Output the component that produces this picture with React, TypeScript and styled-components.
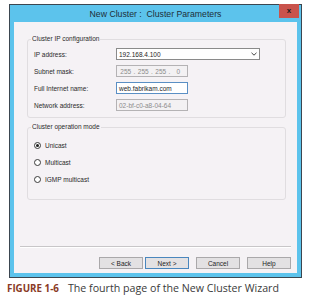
import React from 'react';
import styled, { createGlobalStyle } from 'styled-components';

const Global = createGlobalStyle`
  html, body { margin: 0; padding: 0; background: #ffffff; }
  body { font-family: "Liberation Sans", Arial, sans-serif; }
  * { box-sizing: border-box; }
`;

const Page = styled.div`
  width: 317px;
  height: 299px;
  padding: 4px 0 0 7px;
  display: flex;
  flex-direction: column;
`;

const Window = styled.div`
  margin-left: 2px;
  width: 293px;
  height: 274px;
  border: 1px solid #3b4650;
  background: #5cc3ec;
  padding: 0 4px 4px 4px;
  display: flex;
  flex-direction: column;
`;

const TitleBar = styled.div`
  height: 17px;
  display: grid;
  grid-template-columns: 1fr auto 1fr;
  align-items: center;
`;

const Title = styled.div`
  grid-column: 2;
  font-size: 8.7px;
  color: #1d2e38;
  white-space: nowrap;
  padding-top: 1px;
`;

const CloseButton = styled.div`
  grid-column: 3;
  justify-self: end;
  align-self: start;
  margin-top: -1px;
  margin-right: -2px;
  width: 20px;
  height: 14px;
  background: #c9534c;
  color: #1b1b1b;
  font-weight: bold;
  font-size: 8px;
  display: flex;
  align-items: center;
  justify-content: center;
  line-height: 1;
`;

const Client = styled.div`
  flex: 1;
  background: #f5f2f5;
  display: flex;
  flex-direction: column;
`;

const Body = styled.div`
  padding: 13px 11px 0 13px;
  display: flex;
  flex-direction: column;
  gap: 5px;
`;

const Group = styled.fieldset<{ $h?: number }>`
  margin: 0;
  padding: 5px 6px 6px 6px;
  border: 1px solid #e0dde0;
  border-radius: 3px;
  min-width: 0;
  ${(p) => (p.$h ? `height: ${p.$h}px;` : '')}
`;

const Legend = styled.legend`
  font-size: 6.5px;
  line-height: 8px;
  color: #2a2a2a;
  padding: 0 1px;
  margin-left: -3px;
`;

const FieldGrid = styled.div`
  display: grid;
  grid-template-columns: 82px auto;
  grid-auto-rows: 12px;
  row-gap: 5px;
  align-items: center;
`;

const Label = styled.div`
  font-size: 6.5px;
  color: #2a2a2a;
  white-space: nowrap;
`;

const Box = styled.div<{ $w: number; $variant?: 'normal' | 'disabled' | 'focus' }>`
  width: ${(p) => p.$w}px;
  height: 12px;
  display: flex;
  align-items: center;
  padding: 0 2px;
  font-size: 6.5px;
  white-space: nowrap;
  background: ${(p) => (p.$variant === 'disabled' ? '#f3f1f3' : '#ffffff')};
  color: ${(p) => (p.$variant === 'disabled' ? '#8c8c8c' : '#1e1e1e')};
  border: 1px solid
    ${(p) =>
      p.$variant === 'disabled' ? '#b4b2b4' : p.$variant === 'focus' ? '#5a8fc4' : '#8a8a8a'};
`;

const SelectText = styled.span`
  flex: 1;
`;

const Segment = styled.span`
  flex: 1;
  text-align: center;
`;

const Dot = styled.span`
  width: 4px;
  text-align: center;
`;

const RadioList = styled.div`
  display: flex;
  flex-direction: column;
  gap: 7px;
  padding-top: 4px;
`;

const RadioRow = styled.div`
  display: flex;
  align-items: center;
  gap: 4px;
  height: 10px;
  font-size: 6.5px;
  color: #2a2a2a;
`;

const RadioCircle = styled.span<{ $on?: boolean }>`
  width: 7px;
  height: 7px;
  border-radius: 50%;
  border: 1px solid #3a3a3a;
  background: #ffffff;
  display: flex;
  align-items: center;
  justify-content: center;
  &::after {
    content: '';
    width: 3px;
    height: 3px;
    border-radius: 50%;
    background: ${(p) => (p.$on ? '#1e1e1e' : 'transparent')};
  }
`;

const Spacer = styled.div`
  flex: 1;
`;

const Footer = styled.div`
  padding: 0 6px 4px 6px;
  display: flex;
  flex-direction: column;
`;

const Separator = styled.div`
  height: 1px;
  background: #c8c6c8;
  box-shadow: 0 1px 0 #ffffff;
`;

const ButtonRow = styled.div`
  margin-top: 10px;
  display: flex;
  justify-content: flex-end;
`;

const Button = styled.div<{ $default?: boolean; $gap: number }>`
  margin-left: ${(p) => p.$gap}px;
  width: 44px;
  height: 12px;
  background: #e3e1e3;
  border: 1px solid ${(p) => (p.$default ? '#4a86bd' : '#aaa8aa')};
  font-size: 6.5px;
  color: #1e1e1e;
  display: flex;
  align-items: center;
  justify-content: center;
  white-space: nowrap;
`;

const Caption = styled.div`
  margin-top: 4px;
  font-family: "Open Sans", "Noto Sans", sans-serif;
  font-size: 10.65px;
  line-height: 12px;
  color: #3a3a3a;
  white-space: nowrap;
`;

const FigureLabel = styled.span`
  font-weight: bold;
  font-size: 9.8px;
  color: #8a3a26;
  margin-right: 9px;
`;

const Chevron = () => (
  <svg width="6" height="4" viewBox="0 0 6 4">
    <path d="M0.5 0.8 L3 3.2 L5.5 0.8" fill="none" stroke="#444" strokeWidth="1" />
  </svg>
);

export default function App() {
  return (
    <>
      <Global />
      <Page>
        <Window>
          <TitleBar>
            <Title>New Cluster :&nbsp; Cluster Parameters</Title>
            <CloseButton>x</CloseButton>
          </TitleBar>
          <Client>
            <Body>
              <Group>
                <Legend>Cluster IP configuration</Legend>
                <FieldGrid>
                  <Label>IP address:</Label>
                  <Box $w={144}>
                    <SelectText>192.168.4.100</SelectText>
                    <Chevron />
                  </Box>
                  <Label>Subnet mask:</Label>
                  <Box $w={72} $variant="disabled">
                    <Segment>255</Segment>
                    <Dot>.</Dot>
                    <Segment>255</Segment>
                    <Dot>.</Dot>
                    <Segment>255</Segment>
                    <Dot>.</Dot>
                    <Segment>0</Segment>
                  </Box>
                  <Label>Full Internet name:</Label>
                  <Box $w={72} $variant="focus">web.fabrikam.com</Box>
                  <Label>Network address:</Label>
                  <Box $w={72} $variant="disabled">02-bf-c0-a8-04-64</Box>
                </FieldGrid>
              </Group>
              <Group $h={77}>
                <Legend>Cluster operation mode</Legend>
                <RadioList>
                  <RadioRow>
                    <RadioCircle $on />
                    Unicast
                  </RadioRow>
                  <RadioRow>
                    <RadioCircle />
                    Multicast
                  </RadioRow>
                  <RadioRow>
                    <RadioCircle />
                    IGMP multicast
                  </RadioRow>
                </RadioList>
              </Group>
            </Body>
            <Spacer />
            <Footer>
              <Separator />
              <ButtonRow>
                <Button $gap={0}>&lt; Back</Button>
                <Button $gap={2} $default>Next &gt;</Button>
                <Button $gap={7}>Cancel</Button>
                <Button $gap={7}>Help</Button>
              </ButtonRow>
            </Footer>
          </Client>
        </Window>
        <Caption>
          <FigureLabel>FIGURE 1-6</FigureLabel>The fourth page of the New Cluster Wizard
        </Caption>
      </Page>
    </>
  );
}
